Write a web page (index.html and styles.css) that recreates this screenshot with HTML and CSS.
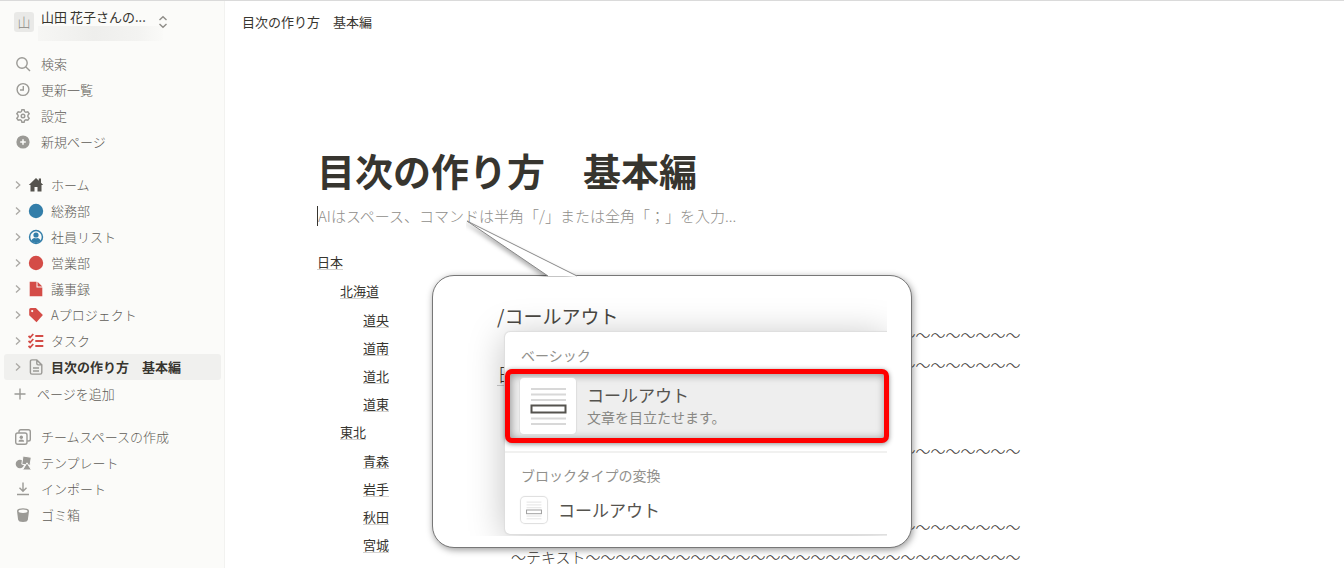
FILE: index.html
```html
<!DOCTYPE html>
<html lang="ja">
<head>
<meta charset="utf-8">
<title>目次の作り方　基本編</title>
<link rel="stylesheet" href="styles.css">
</head>
<body>
<div class="app">
  <aside class="sidebar">
    <button class="workspace" type="button">
      <span class="avatar">山</span>
      <span class="workspace-text">
        <span class="workspace-name">山田 花子さんの...</span>
        <span class="workspace-mail"></span>
      </span>
      <svg class="updown" viewBox="0 0 10 14" width="10" height="14"><path d="M1.500 5 5 1.700 8.500 5M1.500 9 5 12.300 8.500 9"/></svg>
    </button>

    <nav class="group">
      <button class="row" type="button">
        <svg class="icon line" viewBox="0 0 16 16"><circle cx="7" cy="7" r="5.200"/><path d="M10.700 10.700 15 15"/></svg>検索</button>
      <button class="row" type="button">
        <svg class="icon line" viewBox="0 0 16 16"><circle cx="8" cy="7.500" r="5.900"/><path d="M8.300 4v4H5"/></svg>更新一覧</button>
      <button class="row" type="button">
        <svg class="icon line" viewBox="0 0 16 16"><path d="M6.900 1.700h2.200l.5 1.900 1.300.7 1.900-.5 1.400 2-1.300 1.500v1.400l1.300 1.500-1.400 2-1.900-.5-1.300.7-.5 1.900H6.900l-.5-1.900-1.300-.7-1.900.5-1.400-2 1.300-1.500V7.300L1.800 5.800l1.400-2 1.900.5 1.300-.7z"/><circle cx="8" cy="8" r="1.800"/></svg>設定</button>
      <button class="row" type="button">
        <svg class="icon" viewBox="0 0 16 16"><circle class="fill" cx="8" cy="8" r="6.600"/><path class="cut" d="M8 5.200v5.600M5.200 8h5.600"/></svg>新規ページ</button>
    </nav>

    <nav class="group tree">
      <a class="row" href="#"><svg class="chevron" viewBox="0 0 8 10"><path d="M2 1.500 5.800 5 2 8.500"/></svg>
        <svg class="icon" viewBox="0 0 16 16"><path class="dark" d="M8 1 .8 8h1.700v6.500h4V10h3v4.500h4V8h1.700L13 5.800V1.600h-2.200v2.100z"/></svg>ホーム</a>
      <a class="row" href="#"><svg class="chevron" viewBox="0 0 8 10"><path d="M2 1.500 5.800 5 2 8.500"/></svg>
        <svg class="icon" viewBox="0 0 16 16"><circle class="blue" cx="8" cy="8" r="7.200"/></svg>総務部</a>
      <a class="row" href="#"><svg class="chevron" viewBox="0 0 8 10"><path d="M2 1.500 5.800 5 2 8.500"/></svg>
        <svg class="icon" viewBox="0 0 16 16"><circle class="blue" cx="8" cy="8" r="7.200"/><circle class="paper" cx="8" cy="8" r="5.700"/><circle class="blue" cx="8" cy="6" r="2.600"/><path class="blue" d="M3.300 11.800c.8-2 2-2.900 3-2.900 1.100.5 2.300.5 3.400 0 1 0 2.200.9 3 2.900-2.600 2.800-6.800 2.800-9.400 0z"/></svg>社員リスト</a>
      <a class="row" href="#"><svg class="chevron" viewBox="0 0 8 10"><path d="M2 1.500 5.800 5 2 8.500"/></svg>
        <svg class="icon" viewBox="0 0 16 16"><circle class="red" cx="8" cy="8" r="7.200"/></svg>営業部</a>
      <a class="row" href="#"><svg class="chevron" viewBox="0 0 8 10"><path d="M2 1.500 5.800 5 2 8.500"/></svg>
        <svg class="icon" viewBox="0 0 16 16"><path class="red" d="M1.700.7h6.800v5.800h5.800v8.800H1.700z"/><path class="red" d="M9.500.7 14.300 5.500H9.500z"/></svg>議事録</a>
      <a class="row" href="#"><svg class="chevron" viewBox="0 0 8 10"><path d="M2 1.500 5.800 5 2 8.500"/></svg>
        <svg class="icon" viewBox="0 0 16 16"><path class="red" d="M1.200 2.500Q1.200 1 2.700 1h5.200l7 7-6.400 7.200-7.300-7z"/><circle class="paper" cx="4.200" cy="4.100" r="1.100"/></svg>Aプロジェクト</a>
      <a class="row" href="#"><svg class="chevron" viewBox="0 0 8 10"><path d="M2 1.500 5.800 5 2 8.500"/></svg>
        <svg class="icon tasks" viewBox="0 0 16 16"><path d="m.5 3 1.600 1.500L5.300 1M.5 8l1.600 1.500L5.300 6M.5 13l1.600 1.500L5.300 11M7.300 3h8M7.300 8h8M7.300 13h8"/></svg>タスク</a>
      <a class="row selected" href="#" aria-current="page"><svg class="chevron" viewBox="0 0 8 10"><path d="M2 1.500 5.800 5 2 8.500"/></svg>
        <svg class="icon line" viewBox="0 0 16 16"><path d="M4 .9h4.800l5 5V13.500q0 1.600-1.600 1.600H4q-1.600 0-1.600-1.600v-11Q2.400.9 4 .9zM8.800 1v3.500q0 1.400 1.400 1.400h3.400M5 9h6M5 12h6"/></svg>目次の作り方　基本編</a>
      <button class="row add" type="button">
        <svg class="icon line" viewBox="0 0 16 16"><path d="M8 2.500v11M2.500 8h11"/></svg>ページを追加</button>
    </nav>

    <nav class="group">
      <button class="row" type="button">
        <svg class="icon line" viewBox="0 0 16 16"><rect x=".7" y="4" width="11.300" height="11.300" rx="2"/><path d="M4 3.800V2.600Q4 .8 5.800.8h7.600q1.900 0 1.900 1.900v7.500q0 1.800-1.800 1.800h-1.300"/><circle class="fill" cx="6.300" cy="8.300" r="1.700"/><path class="fill" d="M3.500 12.800q0-2.200 2.800-2.200t2.800 2.200z"/></svg>チームスペースの作成</button>
      <button class="row" type="button">
        <svg class="icon" viewBox="0 0 16 16"><circle class="fill" cx="4.900" cy="9" r="4.200"/><path class="fill gap" d="m8 1 8.300 1.300-1.300 8.200-8.200-1.300z"/><path class="fill gap" d="m12 7.800 4.500 7.200H7.500z"/></svg>テンプレート</button>
      <button class="row" type="button">
        <svg class="icon line" viewBox="0 0 16 16"><path d="M8 1.500V10M4.500 6.800 8 10.300l3.500-3.500M2 13.500h12"/></svg>インポート</button>
      <button class="row" type="button">
        <svg class="icon" viewBox="0 0 16 16"><path class="fill" d="M2 4q0-2.700 6-2.700T14 4l-1.100 8.500Q12.500 15 8 15t-4.900-2.500z"/><ellipse class="paper" cx="8" cy="4.300" rx="4.500" ry="1.700"/></svg>ゴミ箱</button>
    </nav>
  </aside>

  <main class="main">
    <header class="topbar">目次の作り方　基本編</header>
    <article class="page">
      <h1 class="title">目次の作り方　基本編</h1>
      <p class="prompt">AIはスペース、コマンドは半角「/」または全角「；」を入力...</p>
      <div class="columns">
        <ul class="toc">
          <li><a href="#">日本</a>
            <ul>
              <li><a href="#">北海道</a>
                <ul>
                  <li><a href="#">道央</a></li>
                  <li><a href="#">道南</a></li>
                  <li><a href="#">道北</a></li>
                  <li><a href="#">道東</a></li>
                </ul>
              </li>
              <li><a href="#">東北</a>
                <ul>
                  <li><a href="#">青森</a></li>
                  <li><a href="#">岩手</a></li>
                  <li><a href="#">秋田</a></li>
                  <li><a href="#">宮城</a></li>
                </ul>
              </li>
            </ul>
          </li>
        </ul>
        <div class="texts">
          <div class="section">
            <p>～～～～～～～～</p>
            <p>～～～～～～～～</p>
          </div>
          <div class="section">
            <p>～～～～～～～～</p>
          </div>
          <div class="section">
            <p>～～～～～～～～</p>
            <p>～テキスト～～～～～～～～～～～～～～～～～～～～～～～～～～～～～</p>
          </div>
        </div>
      </div>

      <section class="balloon">
        <svg class="tail" viewBox="0 0 120 60" width="120" height="60"><path d="M82 56 1 1l110 55"/></svg>
        <div class="shot">
          <p class="command">/コールアウト</p>
          <span class="behind">日</span>
          <div class="menu">
            <h2 class="menu-label">ベーシック</h2>
            <button class="choice" type="button">
              <svg class="thumb" viewBox="0 0 56 56"><path class="rule" d="M11 11h35M11 16.500h35M11 22h35M11 40.500h35M11 46h35"/><rect class="box" x="11.500" y="27.500" width="34" height="7"/></svg>
              <span class="choice-text"><span class="choice-name">コールアウト</span><span class="choice-desc">文章を目立たせます。</span></span>
            </button>
            <h2 class="menu-label second">ブロックタイプの変換</h2>
            <button class="convert" type="button">
              <svg class="thumb small" viewBox="0 0 28 28"><path class="rule" d="M6 5.500h16M6 8.500h16M6 11.500h16M6 20.500h16M6 23.500h16"/><rect class="box" x="6" y="14" width="16" height="4"/></svg>
              <span class="choice-name">コールアウト</span>
            </button>
          </div>
        </div>
      </section>
    </article>
  </main>
</div>
</body>
</html>
```
FILE: styles.css
```css
* { box-sizing: border-box; }

body {
  margin: 0;
  background: #fff;
  color: #37352f;
  font-family: "Noto Sans CJK JP", sans-serif;
  font-size: 13px;
  font-weight: 300;
}

h1, h2, p, ul { margin: 0; padding: 0; }
ul { list-style: none; }
a { color: inherit; text-decoration: none; }

button {
  border: 0;
  background: none;
  padding: 0;
  font: inherit;
  color: inherit;
  text-align: left;
}

.app {
  display: flex;
  height: 100vh;
  overflow: hidden;
  border-top: 1px solid #dadada;
}

/* Sidebar */
.sidebar {
  flex: 0 0 225px;
  background: #fbfbf9;
  border-right: 1px solid #f2f2f0;
  color: #5f5d58;
}

.workspace {
  display: flex;
  align-items: flex-start;
  width: 100%;
  height: 50px;
  padding: 6px 14px;
}

.avatar {
  width: 20px;
  height: 20px;
  margin-top: 5px;
  border-radius: 3px;
  background: #e9e9e7;
  line-height: 19px;
  text-align: center;
  color: #8a8883;
}

.workspace-text {
  display: flex;
  flex-direction: column;
  width: 125px;
  margin-left: 4px;
}

.workspace-name {
  padding-left: 3px;
  line-height: 19px;
  font-weight: 400;
  color: #37352f;
}

.workspace-mail {
  height: 15px;
  background: linear-gradient(90deg, #f6f6f4, #eeeeec 45%, #f3f3f1 80%, #fafaf8);
}

.updown {
  margin-top: 8px;
  margin-left: -5px;
  fill: none;
  stroke: #8f8d88;
  stroke-width: 1.4;
}

.group { padding: 0 3px 17px 4px; }

.row {
  display: flex;
  align-items: center;
  width: 100%;
  height: 26px;
  padding-left: 11px;
  border-radius: 3px;
  line-height: 26px;
  white-space: nowrap;
}

.icon {
  flex: none;
  width: 16px;
  height: 16px;
  margin-right: 10px;
}

.chevron {
  width: 8px;
  height: 10px;
  margin-right: 6px;
  fill: none;
  stroke: #aaa8a4;
  stroke-width: 1.3;
}

.tree .row { padding-left: 10px; }
.tree .icon { margin-right: 7px; }
.tree .add { margin-top: 1px; padding-left: 8px; }
.tree .add .icon { margin-right: 9px; }
.row.selected { background: #f0f0ee; font-weight: 700; color: #37352f; }

.line { fill: none; stroke: #9b9a96; stroke-width: 1.4; }
.fill { fill: #9b9a96; stroke: none; }
.gap { stroke: #fbfbf9; stroke-width: 1; }
.cut { stroke: #fbfbf9; stroke-width: 1.5; }
.paper { fill: #fbfbf9; }
.dark { fill: #55534e; }
.blue { fill: #337ea9; }
.red { fill: #d44c47; }
.tasks { fill: none; stroke: #d44c47; stroke-width: 1.8; }

/* Page */
.main { flex: 1; min-width: 0; }

.topbar {
  height: 42px;
  padding-left: 17px;
  line-height: 42px;
  font-weight: 400;
}

.page { position: relative; padding: 101px 0 0 92px; }

.title {
  font-size: 38px;
  line-height: 52px;
  font-weight: 700;
  white-space: nowrap;
}

.prompt {
  width: 600px;
  height: 20px;
  margin-top: 10px;
  border-left: 1px solid #37352f;
  font-size: 15px;
  line-height: 20px;
  color: #8f8e8a;
}

.columns {
  display: grid;
  grid-template-columns: 194px 1fr;
  margin-top: 22px;
}

.toc { font-weight: 400; }
.toc ul { margin-top: 1px; padding-left: 23px; }
.toc li { line-height: 28px; }
.toc a {
  display: block;
  width: fit-content;
  height: 28px;
}
.toc a::after {
  content: "";
  display: block;
  height: 1px;
  margin-top: -7px;
  background: #d3d2d0;
}

.texts {
  display: flex;
  flex-direction: column;
  gap: 56px;
  width: fit-content;
  padding-top: 72px;
  font-size: 15px;
  line-height: 30px;
  text-align: right;
  white-space: nowrap;
}
.section:last-child { margin-top: -10px; }

/* Speech balloon over the page */
.balloon {
  position: absolute;
  top: 232px;
  left: 207px;
  width: 480px;
  padding: 28px 24px 12px 63px;
  border: 1px solid #777;
  border-radius: 22px;
  background: #fff;
  box-shadow: 1px 2px 7px rgba(0, 0, 0, .4);
}

.tail {
  position: absolute;
  top: -56px;
  left: 33px;
  fill: #fff;
  stroke: #888;
  stroke-width: 1;
  filter: drop-shadow(-2px 2px 2px rgba(0, 0, 0, .3));
  clip-path: inset(0 0 3px 0);
}

.shot { position: relative; }

.command {
  padding-left: 1px;
  font-size: 19px;
  line-height: 23px;
  font-weight: 400;
  color: #4a4843;
}

.behind {
  position: absolute;
  top: 59px;
  left: 1px;
  font-size: 19px;
  line-height: 22px;
  border-bottom: 1px solid #ccc;
}

.menu {
  position: relative;
  margin: 5px 0 1px 9px;
  padding-top: 13px;
  border-radius: 5px 0 0 5px;
  background: #fff;
}

/* The shadow stops at the right edge of the menu */
.menu::before {
  content: "";
  position: absolute;
  inset: 0;
  border-radius: 5px 0 0 5px;
  box-shadow: 0 0 1px 1px #dedede, 0 4px 36px rgba(0, 0, 0, .25);
  clip-path: inset(-40px 0 -2px -40px);
  pointer-events: none;
}

.menu-label {
  padding-left: 16px;
  font-size: 14px;
  line-height: 20px;
  font-weight: 400;
  color: #91908c;
}

.choice {
  position: relative;
  display: flex;
  align-items: center;
  gap: 11px;
  width: calc(100% + 2px);
  height: 74px;
  margin-top: 4px;
  padding-left: 10px;
  border: 5px solid #f00;
  border-radius: 7px;
  background: #eee;
  box-shadow: 0 1px 5px rgba(0, 0, 0, .45), inset 1px 1px 9px rgba(0, 0, 0, .4);
}

.thumb {
  width: 56px;
  height: 56px;
  border-radius: 4px;
  background: #fff;
  box-shadow: 0 0 1px 1px #ddd;
}
.rule { fill: none; stroke: #d8d8d8; stroke-width: 2; }
.box { fill: #fff; stroke: #55534e; stroke-width: 2; }

.choice-text { display: flex; flex-direction: column; padding-bottom: 3px; }
.choice-name {
  font-size: 17px;
  line-height: 24px;
  font-weight: 400;
  color: #55534e;
}
.choice-desc {
  font-size: 14px;
  line-height: 20px;
  font-weight: 400;
  color: #888783;
}

.second {
  margin-top: 8px;
  padding-top: 12px;
  border-top: 2px solid #f1f1f0;
}

.convert {
  display: flex;
  align-items: center;
  gap: 11px;
  width: 100%;
  height: 49px;
  padding-left: 16px;
}
.thumb.small { width: 26px; height: 26px; }
.small .rule { stroke: #e2e2e2; stroke-width: 1; }
.small .box { stroke: #999; stroke-width: 1; }
```
